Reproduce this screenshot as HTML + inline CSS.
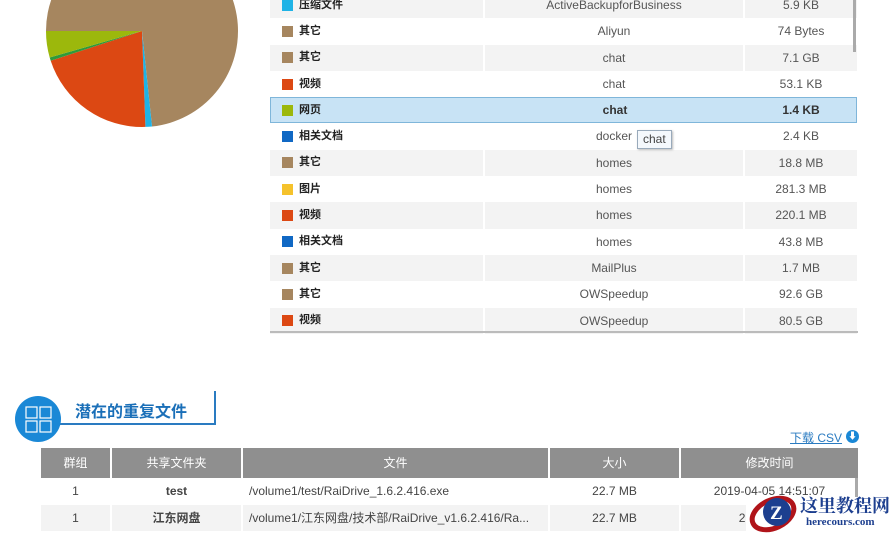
<!DOCTYPE html>
<html><head><meta charset="utf-8"><style>
*{margin:0;padding:0;box-sizing:border-box}
body{width:890px;height:534px;overflow:hidden;background:#fff;font-family:"Liberation Sans","Noto Sans CJK SC",sans-serif;position:relative;color:#555}
.t{position:absolute;left:270px;top:-8px;width:587px}
.r{height:26.3px;display:flex;font-size:12px;line-height:27px}
.r div{border-right:2px solid #fff;white-space:nowrap}
.r .a{width:215px;padding-left:12px;color:#222;font-weight:bold;font-size:11px;display:flex;align-items:center}
.r .b{width:260px;text-align:center}
.r .c{width:112px;text-align:center;border-right:none}
.g{background:#f3f3f3}
.sel{background:#c8e3f5;outline:1px solid #7fb6da;outline-offset:-1px;font-weight:bold;color:#333}
.sq{display:inline-block;width:11px;height:11px;margin-right:6px}
.bt{position:absolute;left:41px;top:448px;width:817px;font-size:12px}
.bh{display:flex;height:30px;background:#8f8f8f;color:#fff;line-height:30px;text-align:center}
.bh div,.br div{border-right:2px solid #fff;white-space:nowrap;overflow:hidden}
.br{display:flex;height:26.5px;line-height:27px;text-align:center;color:#444}
</style></head><body>
<svg width="260" height="140" style="position:absolute;left:0;top:0">
<path d="M142 31 L46 31 A96 96 0 1 1 152 126.5 Z" fill="#a6865f"/>
<path d="M142 31 L152 126.5 A96 96 0 0 1 145.4 126.9 Z" fill="#1fb3e6"/>
<path d="M142 31 L145.4 126.9 A96 96 0 0 1 50.7 60.7 Z" fill="#dc4813"/>
<path d="M142 31 L50.7 60.7 A96 96 0 0 1 49.7 57.5 Z" fill="#2f9a3a"/>
<path d="M142 31 L49.7 57.5 A96 96 0 0 1 46 31 Z" fill="#9cb80c"/>
</svg>
<div class="t">
<div class="r g"><div class="a"><span class="sq" style="background:#1fb3e6"></span>压缩文件</div><div class="b">ActiveBackupforBusiness</div><div class="c">5.9 KB</div></div>
<div class="r"><div class="a"><span class="sq" style="background:#a6865f"></span>其它</div><div class="b">Aliyun</div><div class="c">74 Bytes</div></div>
<div class="r g"><div class="a"><span class="sq" style="background:#a6865f"></span>其它</div><div class="b">chat</div><div class="c">7.1 GB</div></div>
<div class="r"><div class="a"><span class="sq" style="background:#dc4813"></span>视频</div><div class="b">chat</div><div class="c">53.1 KB</div></div>
<div class="r sel"><div class="a" style="border:none"><span class="sq" style="background:#9cb80c"></span>网页</div><div class="b" style="border:none">chat</div><div class="c">1.4 KB</div></div>
<div class="r"><div class="a"><span class="sq" style="background:#1068c4"></span>相关文档</div><div class="b">docker</div><div class="c">2.4 KB</div></div>
<div class="r g"><div class="a"><span class="sq" style="background:#a6865f"></span>其它</div><div class="b">homes</div><div class="c">18.8 MB</div></div>
<div class="r"><div class="a"><span class="sq" style="background:#f5c22c"></span>图片</div><div class="b">homes</div><div class="c">281.3 MB</div></div>
<div class="r g"><div class="a"><span class="sq" style="background:#dc4813"></span>视频</div><div class="b">homes</div><div class="c">220.1 MB</div></div>
<div class="r"><div class="a"><span class="sq" style="background:#1068c4"></span>相关文档</div><div class="b">homes</div><div class="c">43.8 MB</div></div>
<div class="r g"><div class="a"><span class="sq" style="background:#a6865f"></span>其它</div><div class="b">MailPlus</div><div class="c">1.7 MB</div></div>
<div class="r"><div class="a"><span class="sq" style="background:#a6865f"></span>其它</div><div class="b">OWSpeedup</div><div class="c">92.6 GB</div></div>
<div class="r g"><div class="a"><span class="sq" style="background:#dc4813"></span>视频</div><div class="b">OWSpeedup</div><div class="c">80.5 GB</div></div>
</div>
<div style="position:absolute;left:270px;top:331px;width:588px;height:2px;background:#bbb"></div>
<div style="position:absolute;left:853px;top:0;width:3px;height:52px;background:#aaa"></div>
<div style="position:absolute;left:637px;top:130px;border:1px solid #9ab;background:#f4f8fc;font-size:12px;padding:0 5px;height:19px;line-height:17px;color:#444;box-shadow:1px 1px 2px #bbb">chat</div>

<div style="position:absolute;left:55px;top:423px;width:161px;height:2px;background:#2a7bc1"></div>
<div style="position:absolute;left:214px;top:391px;width:2px;height:34px;background:#2a7bc1"></div>
<div style="position:absolute;left:15px;top:396px;width:46px;height:46px;border-radius:50%;background:#1a88d6"></div>
<svg width="30" height="30" style="position:absolute;left:24px;top:405px" fill="none" stroke="#fff" stroke-width="1.2">
<rect x="2" y="2" width="11" height="11"/><rect x="16" y="2" width="11" height="11"/><rect x="2" y="16" width="11" height="11"/><rect x="16" y="16" width="11" height="11"/></svg>
<div style="position:absolute;left:75px;top:398px;font-size:16px;font-weight:bold;color:#1a6fb8">潜在的重复文件</div>
<div style="position:absolute;left:790px;top:429px;font-size:12px;color:#2a7bc1;text-decoration:underline">下载 CSV</div>
<div style="position:absolute;left:846px;top:430px;width:13px;height:13px;border-radius:50%;background:#1a88d6;color:#fff;font-size:9px;line-height:13px;text-align:center">⬇</div>

<div class="bt">
<div class="bh"><div style="width:71px">群组</div><div style="width:131px">共享文件夹</div><div style="width:307px">文件</div><div style="width:131px">大小</div><div style="width:177px;border:none">修改时间</div></div>
<div class="br"><div style="width:71px">1</div><div style="width:131px;font-weight:bold">test</div><div style="width:307px;text-align:left;padding-left:6px">/volume1/test/RaiDrive_1.6.2.416.exe</div><div style="width:131px">22.7 MB</div><div style="width:177px;border:none">2019-04-05 14:51:07</div></div>
<div class="br" style="background:#f3f3f3"><div style="width:71px">1</div><div style="width:131px;font-weight:bold">江东网盘</div><div style="width:307px;text-align:left;padding-left:6px">/volume1/江东网盘/技术部/RaiDrive_v1.6.2.416/Ra...</div><div style="width:131px">22.7 MB</div><div style="width:177px;border:none">2019-04-05</div></div>
</div>
<div style="position:absolute;left:855px;top:478px;width:3px;height:22px;background:#aaa"></div>
<div style="position:absolute;left:746px;top:497px;width:144px;height:37px;background:#fff"></div>
<svg width="60" height="45" style="position:absolute;left:745px;top:490px">
<ellipse cx="28" cy="24" rx="22" ry="14" fill="none" stroke="#b0141a" stroke-width="5" transform="rotate(-25 28 24)"/>
<circle cx="32" cy="22" r="14" fill="#1d3f8f"/>
<text x="25" y="29" font-size="19" font-weight="bold" fill="#fff" font-family="Liberation Serif">Z</text>
</svg>
<div style="position:absolute;left:800px;top:495px;font-size:18px;line-height:20px;white-space:nowrap;font-weight:bold;color:#1d3f8f;font-family:'Noto Serif CJK SC',serif">这里教程网</div>
<div style="position:absolute;left:806px;top:516px;font-size:11px;white-space:nowrap;font-weight:bold;color:#1d3f8f;font-family:'Liberation Serif',serif">herecours.com</div>
</body></html>
